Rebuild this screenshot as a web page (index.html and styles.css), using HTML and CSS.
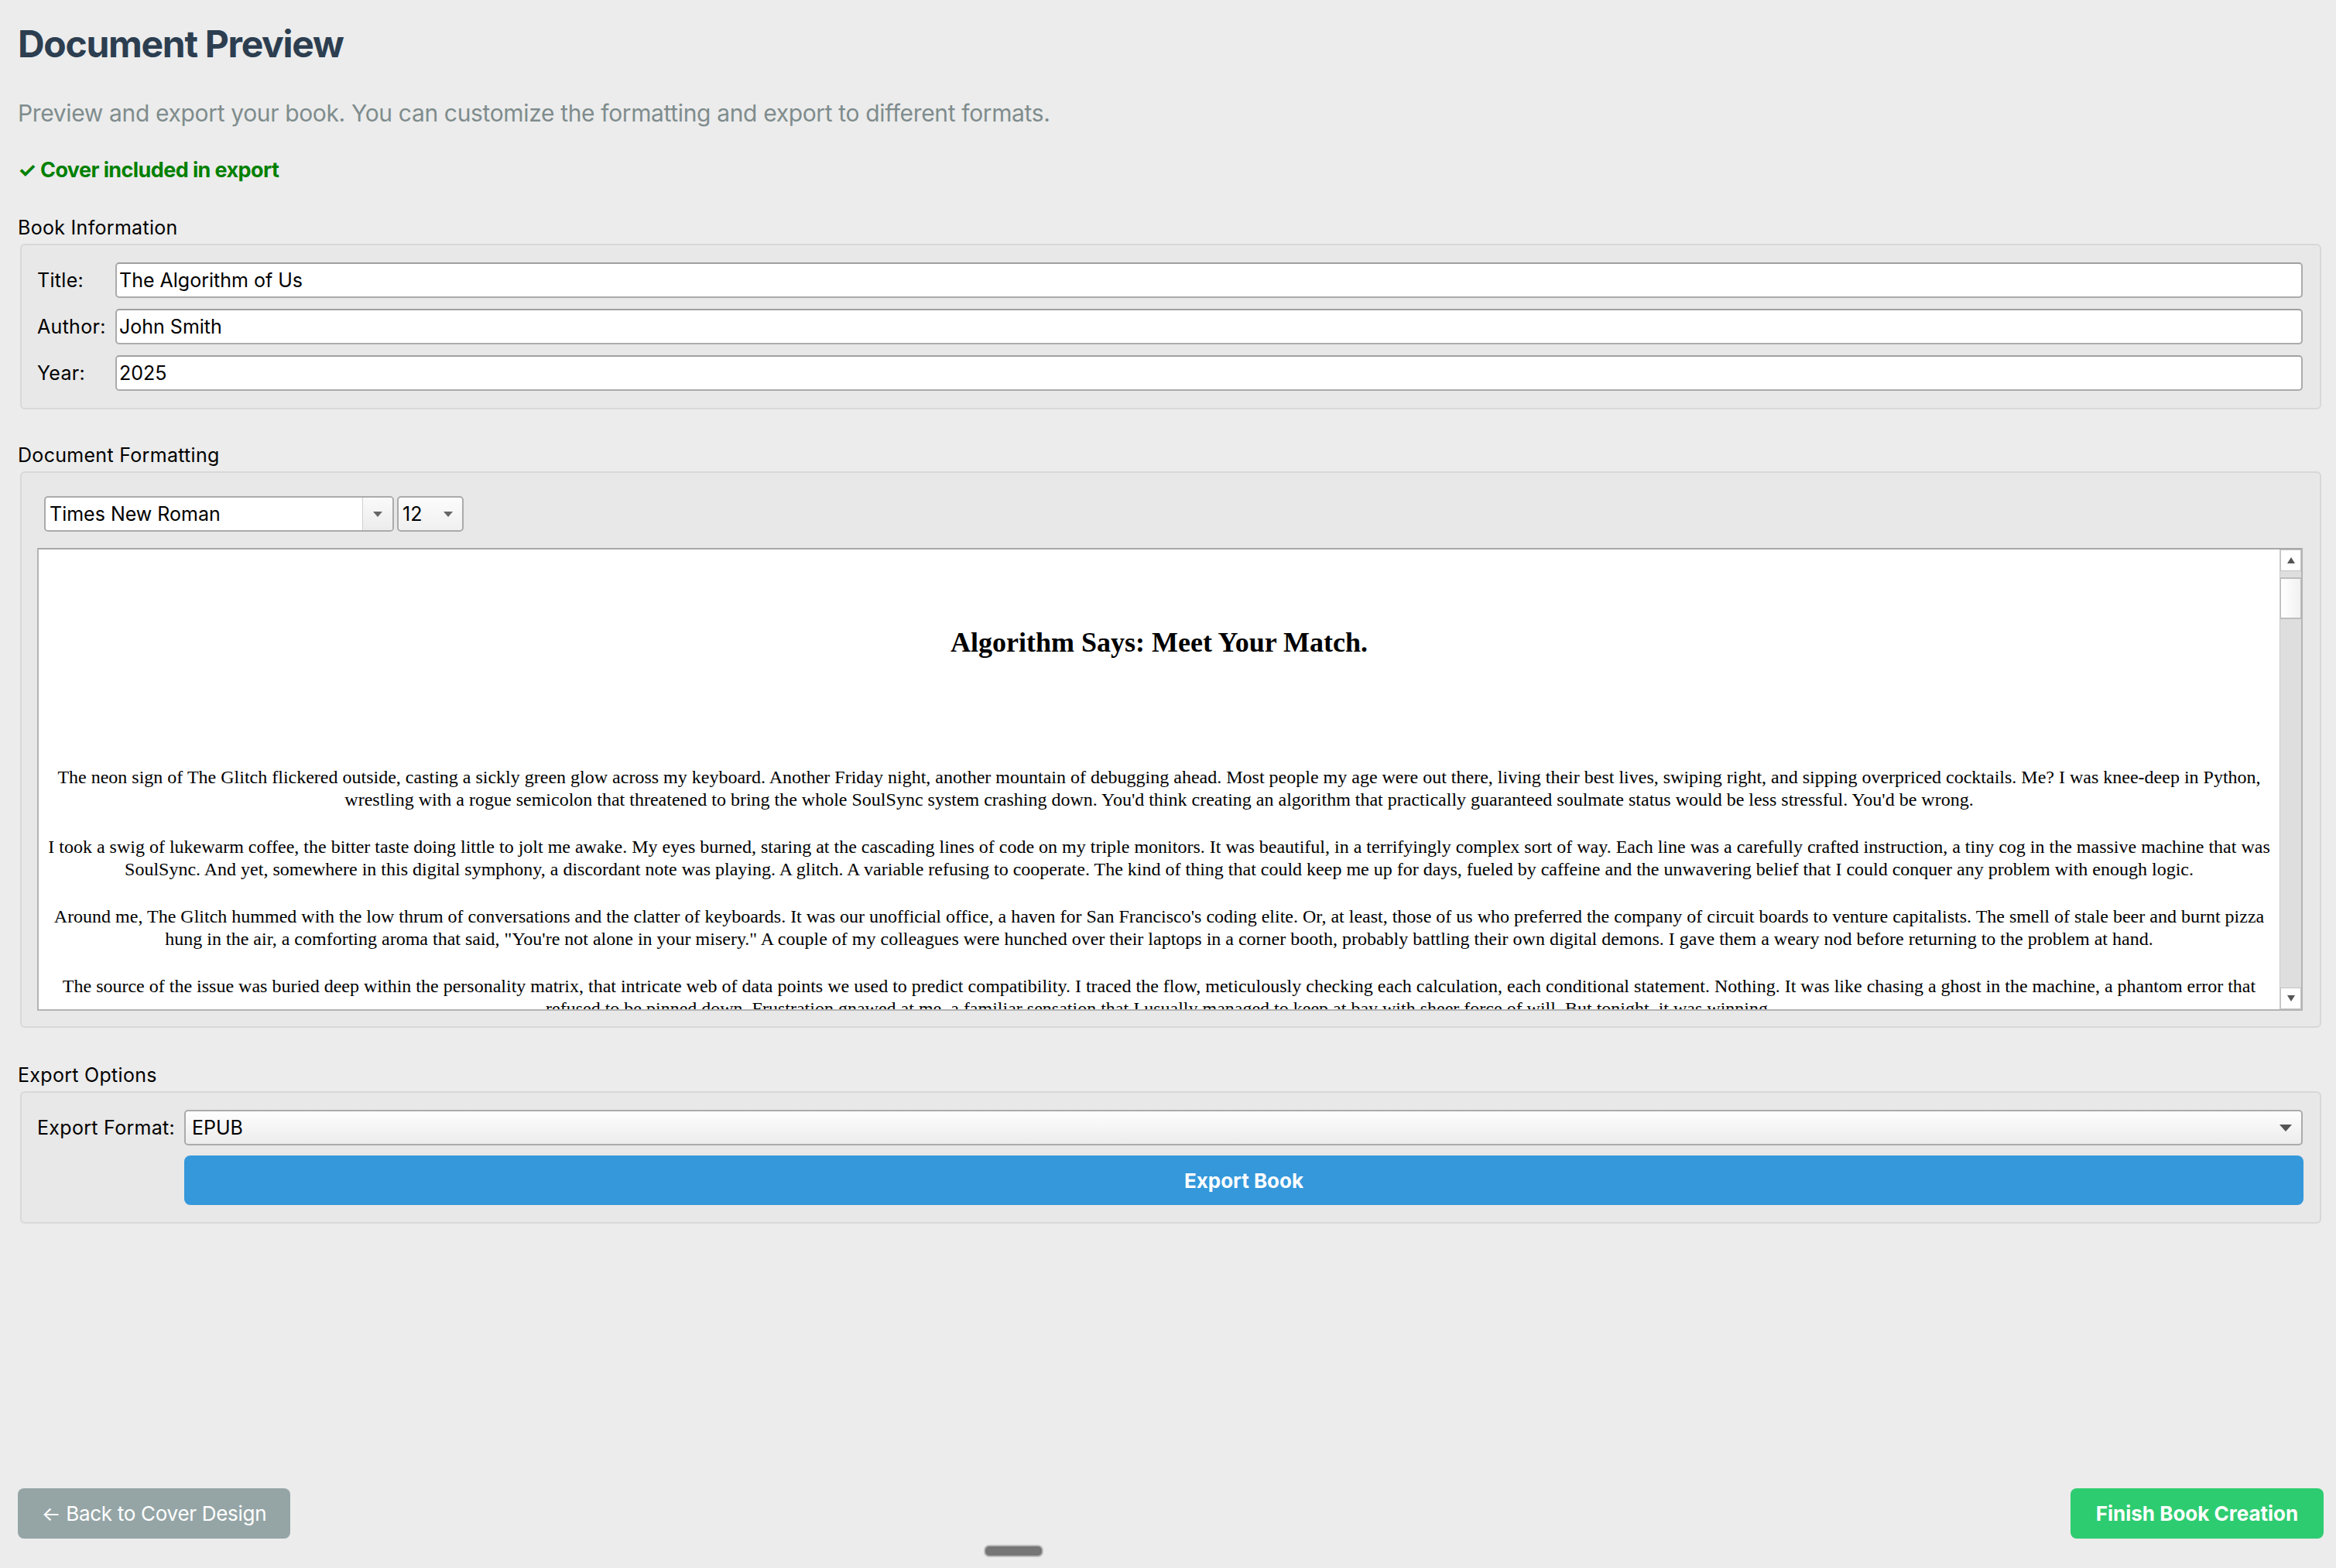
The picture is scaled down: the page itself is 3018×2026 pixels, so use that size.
FILE: index.html
```html
<!DOCTYPE html>
<html lang="en">
<head>
<meta charset="utf-8">
<title>Document Preview</title>
<link rel="stylesheet" href="styles.css">
</head>
<body>
<div class="page">
  <main class="content">
    <h1 class="title">Document Preview</h1>
    <p class="subtitle">Preview and export your book. You can customize the formatting and export to different formats.</p>
    <p class="cover-note">✓ Cover included in export</p>

    <section class="section section-info">
      <div class="section-label">Book Information</div>
      <div class="group info-grid">
        <span class="field-label">Title:</span>
        <div class="input">The Algorithm of Us</div>
        <span class="field-label">Author:</span>
        <div class="input">John Smith</div>
        <span class="field-label">Year:</span>
        <div class="input">2025</div>
      </div>
    </section>

    <section class="section section-format">
      <div class="section-label">Document Formatting</div>
      <div class="group format-group">
        <div class="toolbar">
          <div class="combo combo-font">
            <span class="combo-text">Times New Roman</span>
            <span class="combo-arrow-box"><span class="tri"></span></span>
          </div>
          <div class="combo combo-size">
            <span class="combo-text">12</span>
            <span class="tri"></span>
          </div>
        </div>
        <div class="editor">
          <div class="editor-content">
            <h2 class="doc-heading">Algorithm Says: Meet Your Match.</h2>
            <p class="doc-p">The neon sign of The Glitch flickered outside, casting a sickly green glow across my keyboard. Another Friday night, another mountain of debugging ahead. Most people my age were out there, living their best lives, swiping right, and sipping overpriced cocktails. Me? I was knee-deep in Python, wrestling with a rogue semicolon that threatened to bring the whole SoulSync system crashing down. You'd think creating an algorithm that practically guaranteed soulmate status would be less stressful. You'd be wrong.</p>
            <p class="doc-p">I took a swig of lukewarm coffee, the bitter taste doing little to jolt me awake. My eyes burned, staring at the cascading lines of code on my triple monitors. It was beautiful, in a terrifyingly complex sort of way. Each line was a carefully crafted instruction, a tiny cog in the massive machine that was SoulSync. And yet, somewhere in this digital symphony, a discordant note was playing. A glitch. A variable refusing to cooperate. The kind of thing that could keep me up for days, fueled by caffeine and the unwavering belief that I could conquer any problem with enough logic.</p>
            <p class="doc-p">Around me, The Glitch hummed with the low thrum of conversations and the clatter of keyboards. It was our unofficial office, a haven for San Francisco's coding elite. Or, at least, those of us who preferred the company of circuit boards to venture capitalists. The smell of stale beer and burnt pizza hung in the air, a comforting aroma that said, "You're not alone in your misery." A couple of my colleagues were hunched over their laptops in a corner booth, probably battling their own digital demons. I gave them a weary nod before returning to the problem at hand.</p>
            <p class="doc-p">The source of the issue was buried deep within the personality matrix, that intricate web of data points we used to predict compatibility. I traced the flow, meticulously checking each calculation, each conditional statement. Nothing. It was like chasing a ghost in the machine, a phantom error that refused to be pinned down. Frustration gnawed at me, a familiar sensation that I usually managed to keep at bay with sheer force of will. But tonight, it was winning.</p>
          </div>
          <div class="scrollbar">
            <div class="sb-btn"><span class="sb-tri sb-up"></span></div>
            <div class="sb-handle"></div>
            <div class="sb-track"></div>
            <div class="sb-btn"><span class="sb-tri sb-down"></span></div>
          </div>
        </div>
      </div>
    </section>

    <section class="section section-export">
      <div class="section-label">Export Options</div>
      <div class="group export-grid">
        <span class="field-label">Export Format:</span>
        <div class="combo combo-format">
          <span class="combo-text">EPUB</span>
          <span class="tri tri-lg"></span>
        </div>
        <span></span>
        <button class="btn btn-export">Export Book</button>
      </div>
    </section>
  </main>

  <footer class="footer">
    <div class="footer-buttons">
      <button class="btn btn-back">← Back to Cover Design</button>
      <button class="btn btn-finish">Finish Book Creation</button>
    </div>
    <div class="handle"></div>
  </footer>
</div>
</body>
</html>
```

FILE: styles.css
```css
html, body {
  margin: 0;
  padding: 0;
}

body {
  background: #ececec;
  font-family: Inter, "Noto Sans", "Liberation Sans", sans-serif;
  color: #000;
}

.page {
  box-sizing: border-box;
  height: 2026px;
  display: flex;
  flex-direction: column;
  padding: 28px 19px 0 23px;
}

.content {
  display: flex;
  flex-direction: column;
}

.title {
  margin: 0;
  font-size: 48px;
  line-height: 58px;
  font-weight: 700;
  color: #2c3e50;
  letter-spacing: -1.3px;
}

.subtitle {
  margin: 42px 0 0;
  font-size: 30px;
  line-height: 36px;
  color: #7f8c8d;
  letter-spacing: -0.35px;
}

.cover-note {
  margin: 39px 0 0;
  font-size: 27px;
  line-height: 34px;
  font-weight: 700;
  color: #008000;
  letter-spacing: -0.6px;
}

.section-label {
  font-size: 25px;
  line-height: 30px;
  color: #000;
  letter-spacing: 0.3px;
}

.section-info { margin-top: 42px; }
.section-format { margin-top: 44px; }
.section-export { margin-top: 46px; }

.group {
  margin: 6px 0 0 3px;
  border: 2px solid #d8d8d8;
  border-radius: 6px;
  background: #e8e8e8;
}

.info-grid {
  display: grid;
  grid-template-columns: 101px 1fr;
  row-gap: 14px;
  align-items: center;
  padding: 22px 22px 22px 20px;
}

.field-label {
  font-size: 25px;
  line-height: 30px;
  letter-spacing: 0.3px;
}

.input {
  box-sizing: border-box;
  height: 46px;
  background: #fff;
  border: 2px solid #ababab;
  border-top-color: #a0a0a0;
  border-radius: 5px;
  padding-left: 3px;
  font-size: 25px;
  line-height: 42px;
}

/* formatting */
.format-group {
  padding: 30px 22px 20px 20px;
}

.toolbar {
  display: flex;
  gap: 4px;
  margin-left: 9px;
}

.combo {
  box-sizing: border-box;
  height: 46px;
  border: 2px solid #ababab;
  border-radius: 5px;
  display: flex;
  align-items: center;
  font-size: 25px;
}

.combo-font {
  width: 452px;
  background: #fff;
  overflow: hidden;
}

.combo-font .combo-text {
  flex: 1;
  padding-left: 5px;
}

.combo-arrow-box {
  width: 38px;
  align-self: stretch;
  display: flex;
  align-items: center;
  justify-content: center;
  border-left: 1px solid #d0d0d0;
  background: linear-gradient(#fafafa, #ececec);
}

.combo-size {
  width: 86px;
  background: linear-gradient(#fcfcfc, #f0f0f0);
  padding: 0 12px 0 5px;
  justify-content: space-between;
}

.tri {
  width: 0;
  height: 0;
  border-left: 6px solid transparent;
  border-right: 6px solid transparent;
  border-top: 7px solid #666;
}

.tri-lg {
  border-left-width: 8px;
  border-right-width: 8px;
  border-top-width: 9px;
  border-top-color: #555;
}

.editor {
  box-sizing: border-box;
  margin-top: 21px;
  height: 598px;
  border: 2px solid #b4b4b4;
  border-top-color: #a8a8a8;
  background: #fff;
  display: flex;
}

.editor-content {
  flex: 1;
  overflow: hidden;
  padding: 0 8px;
  font-family: "Liberation Serif", "Times New Roman", serif;
  text-align: center;
}

.doc-heading {
  margin: 99px 0 0;
  font-size: 36px;
  line-height: 42px;
  font-weight: 700;
}

.doc-heading + .doc-p {
  margin-top: 139px;
}

.doc-p {
  margin: 0 0 32px;
  font-size: 24px;
  line-height: 29px;
}

.scrollbar {
  width: 27px;
  display: flex;
  flex-direction: column;
  background: #dedede;
  border-left: 1px solid #cacaca;
}

.sb-btn {
  box-sizing: border-box;
  height: 28px;
  background: #fff;
  border: 1px solid #c4c4c4;
  display: flex;
  align-items: center;
  justify-content: center;
}

.sb-tri {
  width: 0;
  height: 0;
  border-left: 5px solid transparent;
  border-right: 5px solid transparent;
}

.sb-up { border-bottom: 8px solid #555; }
.sb-down { border-top: 8px solid #555; }

.sb-handle {
  box-sizing: border-box;
  margin-top: 8px;
  height: 54px;
  background: linear-gradient(to right, #ffffff, #f1f1f1);
  border: 1px solid #bdbdbd;
  border-top-width: 2px;
  border-bottom-width: 2px;
}

.sb-track { flex: 1; }

/* export */
.export-grid {
  display: grid;
  grid-template-columns: 190px 1fr;
  row-gap: 13px;
  align-items: center;
  padding: 22px 22px 22px 20px;
}

.combo-format {
  background: linear-gradient(#fefefe, #ececec);
  padding: 0 12px 0 8px;
  justify-content: space-between;
}

.btn {
  border: none;
  border-radius: 8px;
  color: #fff;
  font-family: Inter, "Noto Sans", "Liberation Sans", sans-serif;
  font-size: 26px;
  cursor: pointer;
  padding: 0;
}

.btn-export {
  height: 64px;
  background: #3498db;
  font-weight: 700;
  margin-right: -1px;
}

/* footer */
.footer {
  margin-top: auto;
  display: flex;
  flex-direction: column;
}

.footer-buttons {
  display: flex;
  justify-content: space-between;
  align-items: center;
}

.btn-back {
  width: 352px;
  height: 65px;
  background: #95a5a6;
  letter-spacing: -0.3px;
}

.btn-finish {
  width: 327px;
  height: 65px;
  background: #2ecc71;
  font-weight: 700;
  margin-right: -3px;
}

.handle {
  margin: 8px 0 14px 1248px;
  width: 77px;
  height: 16px;
  box-sizing: border-box;
  border-radius: 7px;
  background: #767676;
  border: 2px solid #bcbcbc;
}
```
